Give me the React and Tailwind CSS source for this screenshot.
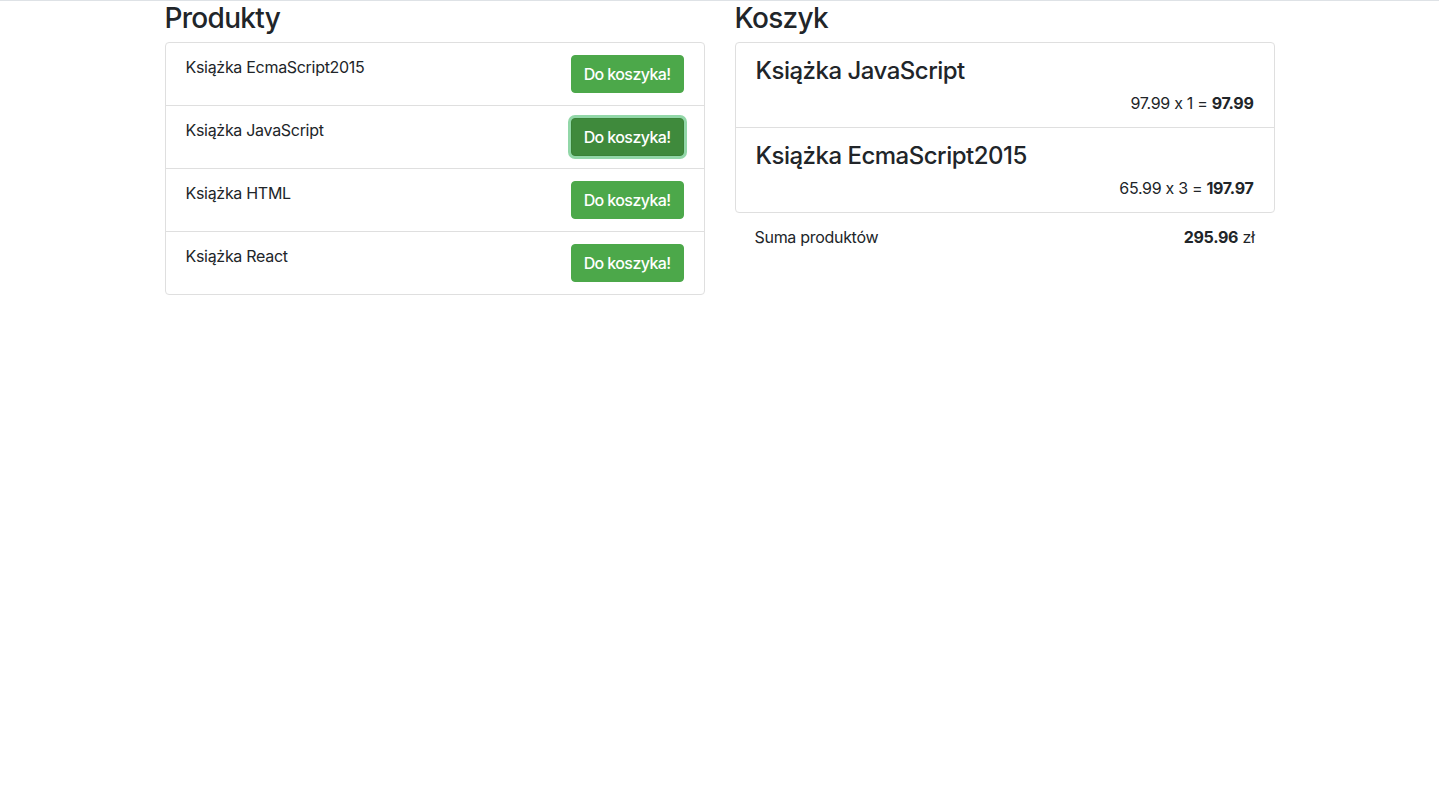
const products = [
  { name: "Książka EcmaScript2015", active: false },
  { name: "Książka JavaScript", active: true },
  { name: "Książka HTML", active: false },
  { name: "Książka React", active: false },
];

const cart = [
  { name: "Książka JavaScript", price: "97.99", qty: 1, total: "97.99" },
  { name: "Książka EcmaScript2015", price: "65.99", qty: 3, total: "197.97" },
];

const App = () => {
  return (
    <div
      className="min-h-screen bg-white border-t border-[#dee2e6] text-[#212529] text-[16px] leading-[24px] tracking-[-0.3px] [font-feature-settings:'calt'_0]"
      style={{ fontFamily: "Inter, 'Noto Sans', sans-serif" }}
    >
      <div className="w-[1140px] mx-auto px-[15px] flex gap-[30px]">
        <div className="w-[540px]">
          <h3 className="text-[28px] leading-[35px] font-medium tracking-[-0.7px] mb-[6px]">Produkty</h3>
          <ul className="border border-[#dfdfdf] rounded-[4px]">
            {products.map((p, i) => (
              <li
                key={p.name}
                className={`flex justify-between items-start px-5 py-3 ${i > 0 ? "border-t border-[#dfdfdf]" : ""}`}
              >
                <span>{p.name}</span>
                <button
                  className={`h-[38px] px-3 rounded-[4px] text-white font-medium tracking-[-0.6px] ${
                    p.active
                      ? "bg-[#3f8a3c] border border-[#3a8237] ring-[3px] ring-[#92d7a8]"
                      : "bg-[#4ca84a] border border-[#4ca84a]"
                  }`}
                >
                  Do koszyka!
                </button>
              </li>
            ))}
          </ul>
        </div>

        <div className="w-[540px]">
          <h3 className="text-[28px] leading-[35px] font-medium tracking-[-0.7px] mb-[6px]">Koszyk</h3>
          <ul className="border border-[#dfdfdf] rounded-[4px]">
            {cart.map((c, i) => (
              <li
                key={c.name}
                className={`px-5 pt-[14px] pb-[12px] ${i > 0 ? "border-t border-[#dfdfdf]" : ""}`}
              >
                <h4 className="text-[24px] leading-[28px] font-medium tracking-[-0.5px] mb-[6px]">{c.name}</h4>
                <p className="text-right">
                  {c.price} x {c.qty} = <b>{c.total}</b>
                </p>
              </li>
            ))}
          </ul>
          <div className="flex justify-between px-5 py-3">
            <span>Suma produktów</span>
            <span>
              <b>295.96</b> zł
            </span>
          </div>
        </div>
      </div>
    </div>
  );
};

export default App;
